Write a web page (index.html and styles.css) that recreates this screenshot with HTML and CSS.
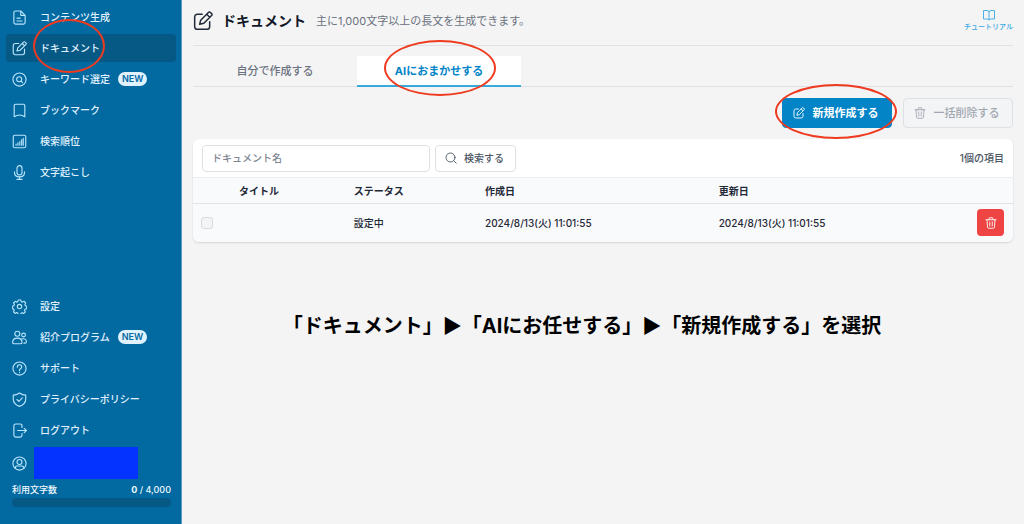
FILE: index.html
```html
<!DOCTYPE html>
<html lang="ja">
<head>
<meta charset="utf-8">
<meta name="viewport" content="width=device-width, initial-scale=1">
<title>ドキュメント</title>
<link rel="stylesheet" href="styles.css">
</head>
<body>
<svg class="symbols" aria-hidden="true">
  <symbol id="edit" viewBox="0 0 24 24"><path d="M11 4H5.500Q2 4 2 7.500V18.500Q2 22 5.500 22H16.500Q20 22 20 18.500V13M8 16l1.200-5L18.500 1.700q1.200-1.200 2.400 0l1.400 1.400q1.200 1.200 0 2.400L13 14.800ZM16.500 4l3.500 3.500"/></symbol>
  <symbol id="doc" viewBox="0 0 24 24"><path d="M14 1.500H5.500Q3 1.500 3 4v16q0 2.500 2.500 2.500h13Q21 22.500 21 20V8.500ZM14 1.500v7h7M8 13h5M8 17.500h8"/></symbol>
  <symbol id="keyword" viewBox="0 0 24 24"><circle cx="12" cy="12" r="10.500"/><circle cx="11.500" cy="11.500" r="4"/><path d="m14.500 14.500 2.500 2.500"/></symbol>
  <symbol id="bookmark" viewBox="0 0 24 24"><path d="M3.500 22V4.500Q3.500 2 6 2h12q2.500 0 2.500 2.500V22Q12 16.500 3.500 22Z"/></symbol>
  <symbol id="rank" viewBox="0 0 24 24"><rect x="2" y="2" width="20" height="20" rx="2.500"/><path d="M6.500 18v-2M9.500 18v-4M12.500 18v-6M15.500 18V9M18 18V7"/></symbol>
  <symbol id="mic" viewBox="0 0 24 24"><rect x="8" y="1" width="8" height="15" rx="4"/><path d="M4 11v1q0 7 8 7t8-7v-1M12 19v4M8 23h8"/></symbol>
  <symbol id="gear" viewBox="0 0 24 24"><circle cx="12" cy="12" r="3.500"/><path d="M10 1.500h4l.8 2.700 1.800.8 2.600-1.400 2.700 2.700-1.300 2.600.7 1.700 2.200.9v4l-2.700.8-.8 1.700 1.300 2.500-2.700 2.700-2.400-1.300-1.800.8-.9 2.300h-3.400l-.8-2.500-1.800-.8-2.500 1.400-2.700-2.700 1.300-2.400-.8-1.800-2.300-.8v-3.800l2.500-.8.8-1.800-1.300-2.600 2.700-2.700L7.400 5l1.800-.8Z"/></symbol>
  <symbol id="people" viewBox="0 0 24 24"><circle cx="8.500" cy="6" r="4"/><circle cx="18.500" cy="8" r="3"/><path d="M1 20q0-7 7.500-7t7.500 7q0 2-2 2H3q-2 0-2-2ZM15.500 14.500q7.500-2 7.500 4.500 0 2-2 2h-2"/></symbol>
  <symbol id="help" viewBox="0 0 24 24"><circle cx="12" cy="12" r="10.500"/><path d="M8.500 10q0-4 3.500-4t3.500 3.500q0 1.500-2 3T12 15.500M12 18v.500"/></symbol>
  <symbol id="shield" viewBox="0 0 24 24"><path d="M12 1.500Q7 5 2 5v6q0 8 10 12 10-4 10-12V5Q17 5 12 1.500ZM8 12l3 3 5.500-5.500"/></symbol>
  <symbol id="logout" viewBox="0 0 24 24"><path d="M16 7V4.500Q16 1.500 13 1.500H6Q3 1.500 3 4.500v15q0 3 3 3h7q3 0 3-3V17M9 12h14M19.500 8.500 23 12l-3.500 3.500"/></symbol>
  <symbol id="user" viewBox="0 0 24 24"><circle cx="12" cy="12" r="10.500"/><circle cx="12" cy="9.500" r="4"/><path d="M5 19.500q0-3.500 3-3.500h8q3 0 3 3.500"/></symbol>
  <symbol id="book" viewBox="0 0 24 24"><path d="M12 5q-1-2-4-2H1v17h7q3 0 4 2 1-2 4-2h7V3h-7q-3 0-4 2ZM12 5v17"/></symbol>
  <symbol id="trash" viewBox="0 0 24 24"><path d="M2 5.500h20M7.500 5.500 9 1.500h6l1.500 4M4 5.500l1 15q.2 2 2.500 2h9q2.300 0 2.500-2l1-15M9.500 10v8M14.500 10v8"/></symbol>
  <symbol id="search" viewBox="0 0 24 24"><circle cx="11" cy="11" r="9"/><path d="m17.500 17.500 5 5"/></symbol>
</svg>
<div class="app">
  <aside class="sidebar">
    <nav class="nav">
      <a class="nav-link" href="#"><svg class="icon"><use href="#doc"/></svg>コンテンツ生成</a>
      <a class="nav-link active" href="#" aria-current="page"><svg class="icon"><use href="#edit"/></svg>ドキュメント<span class="ring ring-nav"></span></a>
      <a class="nav-link" href="#"><svg class="icon"><use href="#keyword"/></svg>キーワード選定<span class="badge">NEW</span></a>
      <a class="nav-link" href="#"><svg class="icon"><use href="#bookmark"/></svg>ブックマーク</a>
      <a class="nav-link" href="#"><svg class="icon"><use href="#rank"/></svg>検索順位</a>
      <a class="nav-link" href="#"><svg class="icon"><use href="#mic"/></svg>文字起こし</a>
    </nav>
    <div class="sidebar-bottom">
      <nav class="nav">
        <a class="nav-link" href="#"><svg class="icon"><use href="#gear"/></svg>設定</a>
        <a class="nav-link" href="#"><svg class="icon"><use href="#people"/></svg>紹介プログラム<span class="badge">NEW</span></a>
        <a class="nav-link" href="#"><svg class="icon"><use href="#help"/></svg>サポート</a>
        <a class="nav-link" href="#"><svg class="icon"><use href="#shield"/></svg>プライバシーポリシー</a>
        <a class="nav-link" href="#"><svg class="icon"><use href="#logout"/></svg>ログアウト</a>
      </nav>
      <div class="account"><svg class="icon"><use href="#user"/></svg><span class="account-name"></span></div>
      <div class="usage">
        <div class="usage-text"><span>利用文字数</span><span><b>0</b> / 4,000</span></div>
        <div class="usage-bar"></div>
      </div>
    </div>
  </aside>
  <main class="main">
    <header class="header">
      <svg class="icon icon-large"><use href="#edit"/></svg>
      <h1 class="title">ドキュメント</h1>
      <p class="subtitle">主に1,000文字以上の長文を生成できます。</p>
      <a class="tutorial" href="#"><svg class="icon icon-small"><use href="#book"/></svg>チュートリアル</a>
    </header>
    <div class="tabs" role="tablist">
      <button class="tab" type="button" role="tab" aria-selected="false">自分で作成する</button>
      <button class="tab selected" type="button" role="tab" aria-selected="true">AIにおまかせする<span class="ring ring-tab"></span></button>
    </div>
    <div class="actions">
      <button class="button primary" type="button"><svg class="icon icon-small"><use href="#edit"/></svg>新規作成する<span class="ring ring-action"></span></button>
      <button class="button muted" type="button" disabled><svg class="icon icon-small"><use href="#trash"/></svg>一括削除する</button>
    </div>
    <section class="card">
      <form class="filter">
        <input class="search-input" type="text" placeholder="ドキュメント名" aria-label="ドキュメント名">
        <button class="search-button" type="button"><svg class="icon icon-small"><use href="#search"/></svg>検索する</button>
        <span class="count">1個の項目</span>
      </form>
      <table class="table">
        <colgroup><col class="col-check"><col class="col-title"><col class="col-status"><col class="col-date"><col><col class="col-delete"></colgroup>
        <thead><tr><th></th><th>タイトル</th><th>ステータス</th><th>作成日</th><th>更新日</th><th></th></tr></thead>
        <tbody><tr>
          <td><input class="check" type="checkbox" aria-label="選択"></td><td></td><td>設定中</td><td>2024/8/13(火) 11:01:55</td><td>2024/8/13(火) 11:01:55</td>
          <td><button class="delete" type="button" aria-label="削除"><svg class="icon icon-small"><use href="#trash"/></svg></button></td>
        </tr></tbody>
      </table>
    </section>
    <p class="guide">「ドキュメント」▶「AIにお任せする」▶「新規作成する」を選択</p>
  </main>
</div>
</body>
</html>
```
FILE: styles.css
```css
* { box-sizing: border-box; }
body {
  margin: 0;
  background: #f4f4f4;
  color: #1f2937;
  font: 500 10px/16px Inter, "Noto Sans CJK JP", sans-serif;
}
button, input { font: inherit; color: inherit; margin: 0; }
button { cursor: pointer; }
a { text-decoration: none; color: inherit; }
h1, p { margin: 0; }
.symbols { position: absolute; width: 0; height: 0; }
.icon {
  flex: none;
  width: 15px;
  height: 15px;
  fill: none;
  stroke: currentColor;
  stroke-width: 1.8;
  stroke-linecap: round;
  stroke-linejoin: round;
  overflow: visible;
}
.icon-small { width: 12px; height: 12px; }
.icon-large { width: 20px; height: 20px; }
.ring {
  position: absolute;
  border: 2px solid #ee3b20;
  border-radius: 50%;
  pointer-events: none;
  z-index: 2;
}

.app { display: grid; grid-template-columns: 182px 1fr; min-height: 100vh; }
.sidebar {
  display: flex;
  flex-direction: column;
  justify-content: space-between;
  padding: 3px 5px 17px 6px;
  background: #0369a1;
  color: #e0f2fe;
  border-right: 1px solid #5d9dc2;
}
.nav { display: flex; flex-direction: column; gap: 3px; }
.nav-link {
  position: relative;
  display: flex;
  align-items: center;
  gap: 13px;
  height: 28px;
  padding: 0 6px;
  border-radius: 4px;
}
.nav-link .icon, .account .icon { color: #bae6fd; }
.active { background: #075985; }
.badge {
  margin-left: -5px;
  padding: 0 4px;
  border-radius: 8px;
  background: #e0f2fe;
  color: #0369a1;
  font-size: 9px;
  line-height: 14px;
  font-weight: 600;
}
.ring-nav { left: 27px; top: -15px; width: 72px; height: 54px; }
.account { display: flex; align-items: center; gap: 7px; padding: 3px 6px 0; }
.account-name { width: 104px; height: 32px; background: #0433ff; }
.usage { padding: 3px 5px 0 6px; font-size: 9px; color: #f0f9ff; }
.usage-text { display: flex; justify-content: space-between; }
.usage-bar { height: 9px; border-radius: 4px; background: #075985; }

.main { padding: 0 11px; }
.header {
  display: flex;
  align-items: center;
  height: 46px;
  padding-bottom: 4px;
  border-bottom: 1px solid #dfe1e4;
}
.title { margin: 0 10px 0 9px; font-size: 14px; line-height: 20px; font-weight: 700; color: #111827; }
.subtitle { font-size: 11px; color: #6b7280; font-weight: 400; }
.header > .icon-large { color: #1f2937; }
.tutorial {
  display: flex;
  flex-direction: column;
  align-items: center;
  margin-left: auto;
  font-size: 7px;
  line-height: 12px;
  color: #38a9e4;
}
.tabs { display: flex; margin-top: 10px; border-bottom: 1px solid #dde0e5; }
.tab {
  position: relative;
  flex: 0 0 20%;
  height: 31px;
  margin-bottom: -1px;
  padding: 0;
  border: 0;
  border-bottom: 2px solid transparent;
  background: transparent;
  color: #6b7280;
  font-size: 11px;
}
.selected { background: #fff; color: #0284c7; border-bottom-color: #38a9db; font-weight: 700; }
.ring-tab { left: 27px; top: -16px; width: 112px; height: 56px; }
.actions { display: flex; justify-content: flex-end; gap: 11px; margin-top: 11px; }
.button {
  position: relative;
  display: flex;
  align-items: center;
  justify-content: center;
  gap: 8px;
  width: 110px;
  height: 30px;
  padding: 0 3px 0 0;
  border: 1px solid #dde0e5;
  border-radius: 4px;
  font-size: 11px;
}
.primary { background: #0284c7; border-color: #0284c7; color: #fff; font-weight: 700; }
.muted { background: #f3f4f6; color: #a2a7b0; cursor: default; }
.ring-action { left: -8px; top: -15px; width: 122px; height: 55px; }

.card {
  margin-top: 11px;
  border-radius: 6px;
  overflow: hidden;
  background: #fff;
  box-shadow: 0 1px 2px #0002;
}
.filter { display: flex; align-items: center; gap: 5px; height: 38px; padding: 0 9px; }
.search-input, .search-button {
  height: 27px;
  border: 1px solid #dde0e5;
  border-radius: 4px;
  background: #fff;
}
.search-input { width: 228px; padding: 0 9px; }
.search-input::placeholder { color: #7d8490; opacity: 1; }
.search-button { display: flex; align-items: center; gap: 7px; padding: 0 11px 0 9px; color: #4b5563; }
.count { margin-left: auto; color: #4b5563; }
.table { width: 100%; table-layout: fixed; border-collapse: collapse; background: #f9fafb; }
.table th, .table td { padding: 0 8px; text-align: left; white-space: nowrap; }
.table th { height: 26px; border-top: 1px solid #eceef1; border-bottom: 1px solid #dfe2e6; font-weight: 700; }
.table td { height: 38px; }
.col-check { width: 38px; }
.col-title { width: 14%; }
.col-status { width: 16%; }
.col-date { width: 28.5%; }
.col-delete { width: 44px; }
.table td:last-child { padding-right: 9px; }
.check {
  display: block;
  appearance: none;
  width: 12px;
  height: 12px;
  border: 1px solid #d8dbe0;
  border-radius: 3px;
  background: #f3f4f6;
}
.delete {
  display: grid;
  place-items: center;
  width: 27px;
  height: 27px;
  margin-left: auto;
  padding: 0;
  border: 0;
  border-radius: 4px;
  background: #ef4444;
  color: #fff;
}
.guide { margin: 69px 0 0; font-size: 20px; line-height: 30px; font-weight: 700; color: #000; text-align: center; padding-right: 42px; }
```
